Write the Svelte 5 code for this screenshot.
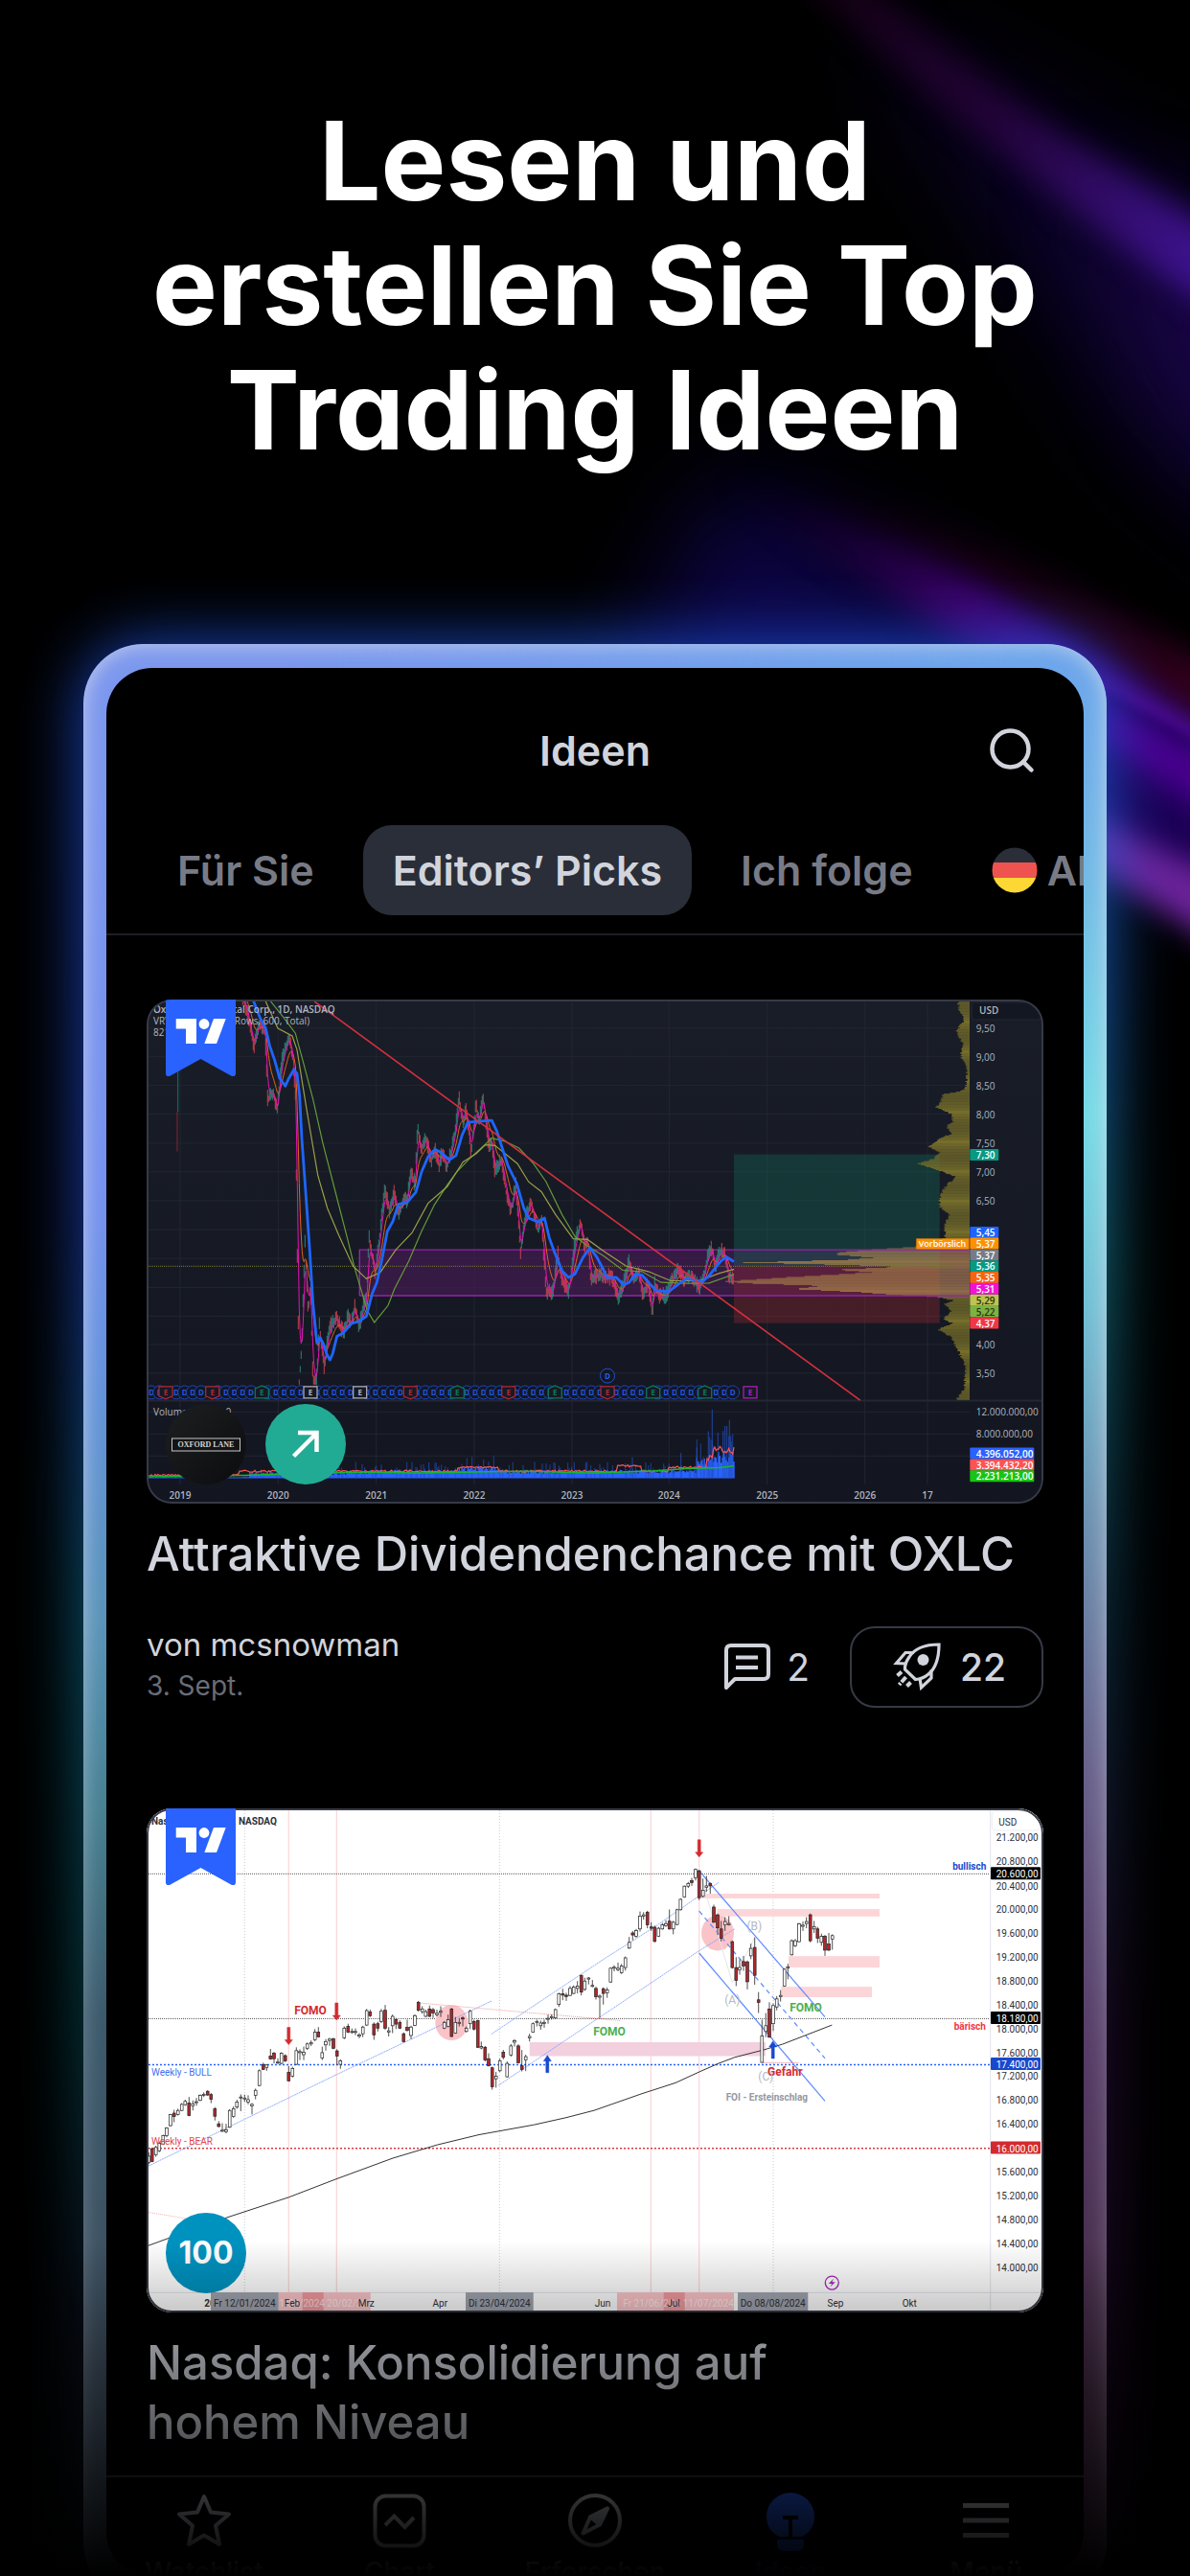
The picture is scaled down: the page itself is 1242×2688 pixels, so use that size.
<script>
  // ---------- helpers ----------
  function lcg(seed) {
    let s = seed;
    return () => {
      s = (s * 1664525 + 1013904223) % 4294967296;
      return s / 4294967296;
    };
  }
  const pairs = (str) => str.split(' ').map((p) => p.split(',').map(Number));
  const r1 = (n) => Math.round(n * 10) / 10;

  // ---------- dark chart ----------
  const ax = (x) => r1(x / 3 - 3);
  const ay = (y) => r1(y / 2.904 - 13);
  const lineA = (pts) => 'M' + pts.map(([x, y]) => `${ax(x)} ${ay(y)}`).join('L');

  function sampler(pts) {
    return (x) => {
      for (let i = 1; i < pts.length; i++) {
        if (x <= pts[i][0]) {
          const [x0, y0] = pts[i - 1];
          const [x1, y1] = pts[i];
          return y0 + ((y1 - y0) * (x - x0)) / (x1 - x0 || 1);
        }
      }
      return pts[pts.length - 1][1];
    };
  }

  const blue = pairs('343,40 365,95 382,125 395,180 410,222 425,275 443,300 455,275 470,250 480,262 488,330 495,460 507,620 520,800 530,960 542,1078 552,1062 562,1080 573,1112 583,1130 592,1110 605,1058 625,1048 650,1020 675,1012 697,998 715,930 730,895 745,830 763,740 780,710 797,658 825,652 852,622 870,560 890,515 912,492 930,500 957,524 978,510 997,448 1015,410 1060,406 1090,404 1105,435 1120,480 1140,540 1168,595 1190,670 1205,700 1235,712 1255,700 1270,760 1285,800 1310,860 1330,880 1350,870 1375,820 1398,790 1420,820 1440,858 1450,880 1480,880 1502,902 1520,895 1540,870 1560,872 1585,900 1605,920 1645,922 1675,900 1700,884 1750,892 1770,875 1790,850 1810,828 1825,818 1848,832');
  const green = pairs('395,40 440,95 475,140 500,230 530,340 560,470 600,620 640,770 660,850 700,980 722,1016 765,965 785,915 830,830 870,740 910,660 950,600 980,560 1020,520 1060,485 1090,458 1130,467 1175,488 1220,535 1260,590 1310,690 1350,755 1390,785 1440,815 1500,858 1560,862 1620,895 1700,898 1770,897 1848,870');
  const olive = pairs('380,40 420,125 465,148 480,190 510,370 545,570 575,670 610,750 655,845 697,884 740,865 790,795 840,745 890,655 950,605 1000,530 1040,505 1070,478 1100,480 1170,535 1205,590 1245,620 1290,690 1345,763 1390,765 1440,800 1510,845 1580,862 1650,890 1740,890 1800,868 1848,855');
  const price = pairs('310,30 325,80 345,180 360,110 380,130 388,340 405,320 418,375 430,240 440,195 455,150 465,200 475,330 482,900 487,1200 495,1080 505,780 515,980 522,900 530,1200 540,1200 550,1030 565,1150 580,1040 602,1000 625,1050 640,1000 650,1020 660,970 675,1030 690,960 698,940 705,760 725,870 735,790 745,700 755,620 770,680 785,625 797,690 815,640 825,650 835,560 850,600 857,430 870,490 885,460 900,530 912,490 925,540 935,500 950,545 965,490 978,420 987,340 1000,410 1010,370 1025,500 1040,360 1050,410 1062,330 1080,480 1090,470 1100,560 1120,520 1135,620 1150,680 1165,600 1180,810 1190,720 1212,650 1235,740 1245,700 1260,920 1280,930 1297,810 1310,890 1330,925 1350,780 1368,710 1380,790 1390,770 1400,890 1425,870 1440,880 1465,880 1485,940 1500,910 1520,830 1535,890 1550,860 1560,925 1580,905 1592,990 1600,900 1615,940 1635,935 1655,890 1675,850 1690,890 1705,880 1720,885 1740,915 1755,870 1765,820 1778,790 1790,850 1805,800 1820,810 1832,880 1848,880');

  const rnd = lcg(7);
  const at = sampler(price);
  let upBars = '';
  let downBars = '';
  let magenta = [];
  let orange = [];
  let fast = 40;
  let slow = 20;
  for (let x = 310; x <= 1848; x += 3) {
    const y = at(x);
    const drop = at(x + 4) - at(x - 4);
    const reach = 6 + rnd() * 24;
    const top = Math.max(42, y - reach);
    const bottom = Math.min(1205, y + 6 + rnd() * 20);
    const seg = `M${ax(x)} ${ay(top)}V${ay(bottom)}`;
    if (rnd() * 40 - 20 > drop) upBars += seg;
    else downBars += seg;
    fast += (y - fast) * 0.45;
    slow += (y - slow) * 0.16;
    magenta.push([x, Math.max(42, fast)]);
    orange.push([x, Math.max(42, slow)]);
  }

  // horizontal volume profile, left edge by height
  const profile = sampler(
    pairs('44,1135 70,1140 100,1155 135,1130 170,1150 210,1145 240,1165 300,1160 315,1150 325,1090 350,1080 365,1068 385,1115 410,1120 420,1100 445,1115 460,1075 485,1042 500,1080 520,1060 535,1012 550,1060 575,1130 600,1100 630,1080 665,1078 690,1110 720,1095 760,1095 788,1000 792,925 797,850 803,770 810,750 820,870 826,790 835,465 843,800 848,960 857,750 865,870 880,600 892,405 897,465 905,710 915,620 925,830 932,920 938,1060 950,1125 960,1090 980,1115 1005,1090 1020,1120 1038,1072 1060,1115 1100,1135 1150,1160 1220,1155 1250,1130').map(([y, x]) => [y, x + 1410])
  );
  let outer = '';
  let inner = '';
  for (let y = 46; y < 1252; y += 3) {
    const bar = `M${ax(profile(y) + rnd() * 8)} ${ay(y)}H859`;
    if (y > 790 && y < 940) inner += bar;
    else outer += bar;
  }

  let volume = '';
  let volSpike = '';
  const volAvg = [];
  for (let x = 16; x <= 1848; x += 4) {
    let h = x < 330 ? 3 : x < 640 ? 14 : 20;
    if (x > 1730) h = 50;
    if (x > 1770) h = 62;
    if (x > 980 && x < 1110) h = 28;
    volume += `M${ax(x)} ${ay(1488)}V${ay(1488 - h * (0.7 + rnd() * 0.6))}`;
    if (rnd() > 0.72 && x > 300) volSpike += `M${ax(x)} ${ay(1488)}V${ay(1488 - h * (1.2 + rnd() * 1.3))}`;
    const base = x < 300 ? 6 : x > 1780 ? 72 : x > 1762 ? 50 : x > 980 && x < 1110 ? 30 : x > 1480 && x < 1560 ? 34 : x > 1640 ? 30 : 18;
    volAvg.push([x, 1488 - base - rnd() * (x > 1760 ? 26 : 6)]);
  }
  const volGreen = pairs('16,1484 300,1480 500,1474 700,1469 850,1472 1000,1470 1200,1467 1400,1472 1480,1470 1600,1466 1700,1459 1800,1456 1848,1451');
  const spikes = pairs('1768,1346 1780,1280 1798,1350 1814,1345 1820,1330 1826,1330 1834,1312 1838,1360 1732,1395 1682,1412 1530,1425 1064,1432 1080,1438 893,1440');

  const earnings = [
    [69, '#b22833', 'r'], [215, '#b22833', 'r'], [370, '#0b7a5f', 'g'], [522, '#b2b5be', 'w'], [677, '#b2b5be', 'w'],
    [835, '#b22833', 'r'], [982, '#0b7a5f', 'g'], [1142, '#b22833', 'r'], [1288, '#0b7a5f', 'g'], [1452, '#b22833', 'r'],
    [1595, '#0b7a5f', 'g'], [1757, '#0b7a5f', 'g'], [1899, '#b01fc0', 'w']
  ];
  const shape = { r: 'M-7-6H7V4L0 7L-7 4Z', g: 'M-7 6H7V-4L0-7L-7-4Z', w: 'M-7-6H7V6H-7Z' };
  const dividends = [];
  for (let x = 24; x < 1870; x += 26) {
    if (!earnings.some(([e]) => Math.abs(e - x) < 14)) dividends.push(x);
  }

  const gridA = [124, 211, 298, 385, 473, 560, 647, 735, 822, 910, 997, 1083, 1170, 1287, 1354, 1421];
  const yearsA = [[114, '2019'], [421, '2020'], [728, '2021'], [1035, '2022'], [1341, '2023'], [1645, '2024'], [1952, '2025'], [2258, '2026'], [2454, '17']];
  const scaleA = [[124, '9,50'], [211, '9,00'], [298, '8,50'], [385, '8,00'], [473, '7,50'], [560, '7,00'], [647, '6,50'], [1083, '4,00'], [1170, '3,50'], [1287, '12.000.000,00'], [1354, '8.000.000,00']];
  const tagsA = [
    [508, '7,30', '#089981', '#fff'], [743, '5,45', '#1e63ff', '#fff'], [777, '5,37', '#ff9100', '#fff'], [812, '5,37', '#787b86', '#fff'],
    [846, '5,36', '#089981', '#fff'], [880, '5,35', '#f5650f', '#fff'], [914, '5,31', '#f312d2', '#fff'], [949, '5,29', '#bcc452', '#333a10'],
    [983, '5,22', '#7cb342', '#1f330c'], [1018, '4,37', '#f23645', '#fff']
  ];
  const volTags = [[1413, '4.396.052,00', '#2962ff'], [1448, '3.394.432,20', '#ff5252'], [1482, '2.231.213,00', '#18c415']];

  // ---------- light chart ----------
  const bx = (x) => r1(x / 3 - 3);
  const by = (y) => r1(y / 2.851 - 11);
  const lineB = (pts) => 'M' + pts.map(([x, y]) => `${bx(x)} ${by(y)}`).join('L');

  // x, body top, body bottom, high, low; a trailing r marks a falling day
  const raw = `16,1066,1085,1055,1090 26,1045,1082,1040,1084,r 38,1040,1062,1035,1068 49,1028,1050,1022,1054 61,1005,1030,1002,1032 72,982,1005,980,1010 84,942,975,940,978 95,938,948,928,965,r 107,930,942,925,945 119,912,930,908,932 130,903,913,898,916 142,908,945,890,947,r 154,910,916,900,930 165,904,907,893,916 177,885,900,882,902 188,882,885,876,890 200,873,884,870,886,r 211,883,897,878,908,r 223,925,947,920,960,r 235,970,978,962,980,r 246,989,992,968,994 258,988,993,970,998 269,930,980,926,982 281,925,948,918,952 292,905,920,898,925 304,890,893,882,932 316,893,896,883,905 327,898,905,885,912 339,912,916,908,942 350,870,885,865,897 362,812,856,808,858 374,794,808,788,810,r 385,795,802,792,812 397,768,777,747,779,r 408,760,776,756,790,r 420,786,789,775,793 431,760,790,757,793 443,767,783,763,786,r 454,817,842,798,844,r 466,805,828,800,832 478,752,793,742,795 489,755,758,748,780 501,757,764,740,780 512,732,745,728,750 524,728,732,722,738 536,697,720,688,724 547,697,711,682,713,r 559,758,774,740,780 570,725,735,718,752 582,718,722,714,738 594,717,745,714,748,r 605,753,768,748,795,r 616,782,793,778,806 628,685,714,680,718 640,680,697,672,700,r 652,695,698,686,702 663,695,698,686,706 675,705,709,700,715 686,682,702,678,712 698,633,676,628,678 709,637,648,630,652,r 721,673,705,668,720,r 733,672,685,666,695,r 744,635,665,628,670 756,632,685,616,690,r 767,693,697,682,710 779,650,678,645,700 790,660,673,655,688,r 802,668,685,662,688,r 814,702,725,698,728,r 825,683,692,660,695,r 837,682,707,678,718 849,648,677,644,679 860,608,632,604,636,r 872,628,636,620,642 883,636,650,630,652 895,628,650,618,652,r 906,630,640,625,655,r 918,641,645,630,650 930,635,638,620,652 941,668,685,664,688 953,660,680,645,683 964,628,710,625,712,r 976,668,700,652,702 988,668,671,655,680 999,655,658,650,680,r 1010,685,695,680,698 1022,635,672,630,688 1034,665,688,660,692,r 1046,663,742,660,744,r 1057,740,744,725,748 1069,742,780,738,784,r 1080,776,797,760,799,r 1091,803,860,800,868,r 1103,828,836,815,862 1115,782,812,776,816 1126,757,772,750,778,r 1138,790,830,784,832 1150,738,765,732,770 1161,723,727,718,740 1173,738,788,733,790,r 1184,797,808,750,814,r 1196,770,780,764,813 1208,710,714,702,725 1219,672,697,668,699 1231,665,668,660,680 1243,670,678,663,690 1254,668,671,660,684 1266,656,659,645,672 1277,651,654,644,660 1289,630,655,627,658 1300,583,615,580,622 1312,583,587,568,602,r 1323,587,591,580,604,r 1335,567,588,560,590 1346,563,582,558,584 1358,560,567,545,582 1370,528,578,526,588,r 1381,545,570,535,574 1393,536,539,533,555 1405,558,561,542,564 1416,567,592,562,600,r 1428,590,593,585,655 1439,568,582,564,615,r 1451,572,580,564,595 1462,507,548,504,550 1473,504,507,498,516 1485,507,511,490,516 1496,500,520,494,524 1508,476,505,472,514 1520,430,447,414,449 1531,402,408,396,424,r 1542,395,412,390,416 1554,352,390,338,398 1565,348,352,340,362 1577,340,378,336,388,r 1589,384,388,370,396,r 1600,385,427,380,430,r 1612,388,412,384,414 1624,378,390,372,392 1635,374,380,364,384 1646,367,390,332,392,r 1658,370,390,366,406 1670,333,377,330,379 1681,302,333,299,335 1693,263,295,261,297 1705,255,263,250,268 1716,246,252,238,262,r 1728,213,238,210,246 1739,217,297,214,304,r 1751,275,293,240,296 1762,262,266,232,280 1774,255,262,252,285,r 1785,325,370,318,372,r 1797,348,387,344,408,r 1808,390,418,366,427,r 1820,368,378,355,396 1832,374,378,352,380 1843,428,505,424,508,r 1855,505,543,474,560,r 1866,505,512,480,526 1878,487,500,470,515,r 1890,488,547,484,570,r 1901,448,470,434,480 1913,445,528,415,556,r 1925,601,609,578,640,r 1936,708,787,660,789 1948,678,695,640,712 1959,628,712,608,714,r 1971,618,672,612,694 1982,598,622,590,632 1994,588,592,572,606 2006,510,560,507,562 2017,503,507,494,540 2029,425,467,421,469 2040,425,440,420,444 2052,375,428,372,430 2064,379,382,368,396 2075,368,374,355,388 2087,348,425,344,430,r 2099,383,390,366,402 2110,390,418,384,432,r 2122,412,430,404,440 2133,412,453,408,470,r 2145,435,453,402,456,r 2156,410,420,406,452`;
  const candles = raw.split(' ').map((c) => {
    const [x, t, b, h, l, f] = c.split(',');
    return { x: bx(+x), t: by(+t), b: by(+b), h: by(+h), l: by(+l), down: f === 'r' };
  });
  const average = pairs('15,1332 150,1285 250,1252 455,1188 600,1135 780,1072 920,1032 1050,1002 1220,973 1320,952 1410,930 1560,880 1665,848 1740,815 1800,790 1850,772 1940,750 2000,733 2155,676');
  const scaleB = [[118, '21.200,00'], [189, '20.800,00'], [261, '20.400,00'], [331, '20.000,00'], [402, '19.600,00'], [473, '19.200,00'], [544, '18.800,00'], [615, '18.400,00'], [687, '18.000,00'], [757, '17.600,00'], [828, '17.200,00'], [899, '16.800,00'], [970, '16.400,00'], [1112, '15.600,00'], [1183, '15.200,00'], [1254, '14.800,00'], [1325, '14.400,00'], [1396, '14.000,00']];
  const tagsB = [[226, '20.600,00', '#000'], [656, '18.180,00', '#000'], [793, '17.400,00', '#1848cc'], [1042, '16.000,00', '#d32a2f']];
  const zones = [[1745, 285, 2304, 299], [1796, 331, 2304, 353], [2019, 471, 2304, 505], [1996, 562, 2280, 593]];
  const arrows = [[454, 683], [604, 610], [1739, 125]];
  const ups = [[1264, 766], [1970, 724]];
  const datesB = [
    [210, 422, 'Fr 12/01/2024'],
    [1008, 1220, 'Di 23/04/2024'],
    [1860, 2080, 'Do 08/08/2024']
  ];
  const monthsB = [[465, 'Feb'], [697, 'Mrz'], [928, 'Apr'], [1437, 'Jun'], [1659, 'Jul'], [2166, 'Sep'], [2398, 'Okt']];

  // ---------- navigation ----------
  const tabs = ['Für Sie', 'Editors’ Picks', 'Ich folge'];
  let active = $state(1);
</script>

{#snippet ribbon()}
  <svg class="ribbon" viewBox="0 0 73 80" aria-hidden="true">
    <path d="M0 0H73V78Q72 81 69 80L36.500 62L4 80Q1 81 0 78Z" fill="#2962ff" />
    <path d="M10.700 20H32V46H21V30.500H10.700Z" fill="#fff" />
    <circle cx="40" cy="25.500" r="5.400" fill="#fff" />
    <path d="M50 20H62.700L53 46H40.300Z" fill="#fff" />
  </svg>
{/snippet}

<div class="page">
  <svg class="beams" viewBox="0 0 1242 2688" preserveAspectRatio="xMaxYMin slice" aria-hidden="true">
    <defs>
      <filter id="soft" filterUnits="userSpaceOnUse" color-interpolation-filters="sRGB" x="0" y="-200" width="1500" height="1600"><feGaussianBlur stdDeviation="50" /></filter>
      <filter id="mid" filterUnits="userSpaceOnUse" color-interpolation-filters="sRGB" x="0" y="-200" width="1500" height="1600"><feGaussianBlur stdDeviation="15" /></filter>
      <filter id="fine" filterUnits="userSpaceOnUse" color-interpolation-filters="sRGB" x="0" y="-200" width="1500" height="1600"><feGaussianBlur stdDeviation="6" /></filter>
      <linearGradient id="arc" gradientUnits="userSpaceOnUse" x1="820" y1="0" x2="1242" y2="270">
        <stop offset="0" stop-color="#12000f" />
        <stop offset=".5" stop-color="#220338" />
        <stop offset="1" stop-color="#3c128c" />
      </linearGradient>
      <linearGradient id="ray" gradientUnits="userSpaceOnUse" x1="760" y1="490" x2="1242" y2="800">
        <stop offset="0" stop-color="#12001f" stop-opacity="0" />
        <stop offset=".5" stop-color="#3c006a" />
        <stop offset="1" stop-color="#5a10a8" />
      </linearGradient>
      <linearGradient id="ember" gradientUnits="userSpaceOnUse" x1="780" y1="480" x2="1242" y2="720">
        <stop offset="0" stop-color="#150008" stop-opacity="0" />
        <stop offset="1" stop-color="#30001c" />
      </linearGradient>
    </defs>
    <path d="M900 20L1400 280V640L1180 460Z" fill="#0b0328" filter="url(#soft)" />
    <path d="M1130 200L1400 320V560L1240 440Z" fill="#1a0548" filter="url(#soft)" />
    <path d="M820 -40H880Q1000 66 1110 142Q1200 196 1340 290V370Q1180 270 1070 180Q940 80 820 -40Z" fill="url(#arc)" filter="url(#mid)" />
    <path d="M760 500L1000 620L1262 800V960L1100 800L640 720Z" fill="#0c0444" filter="url(#soft)" />
    <path d="M760 480Q940 520 1070 590Q1180 645 1300 715V785Q1150 690 1010 610Q890 540 760 480Z" fill="url(#ember)" filter="url(#mid)" />
    <path d="M740 495Q940 560 1040 620Q1160 690 1300 790V870Q1110 740 970 650Q870 580 740 495Z" fill="url(#ray)" filter="url(#mid)" />
    <path d="M1150 720Q1200 745 1300 800V985L1150 880Z" fill="#1c0056" filter="url(#fine)" />
    <path d="M1140 725Q1200 755 1300 810V870Q1200 810 1140 765Z" fill="#4a0090" filter="url(#mid)" />
    <path d="M1120 840Q1200 885 1300 925V1005Q1200 940 1120 895Z" fill="#6a2298" filter="url(#mid)" />
  </svg>

  <h1>Lesen und<br />erstellen Sie Top<br />Trading Ideen</h1>

  <div class="device">
    <div class="glow"></div>
    <div class="frame">
      <div class="screen">
        <header class="bar">
          <h2>Ideen</h2>
          <button class="search" aria-label="Suche">
            <svg viewBox="0 0 48 48" fill="none" stroke="#d1d4dc" stroke-width="4.500" stroke-linecap="round">
              <circle cx="22.500" cy="22.500" r="19" />
              <path d="M36 36L44.500 44.500" />
            </svg>
          </button>
        </header>

        <nav class="tabs" aria-label="Kategorien">
          {#each tabs as tab, i}
            <button class:active={active === i} onclick={() => (active = i)}>{tab}</button>
          {/each}
          <button>
            <svg class="flag" viewBox="0 0 48 48" aria-hidden="true">
              <clipPath id="disc"><circle cx="24" cy="24" r="23.500" /></clipPath>
              <g clip-path="url(#disc)">
                <path d="M0 0H48V16H0Z" fill="#2a2e39" />
                <path d="M0 16H48V32H0Z" fill="#ef5350" />
                <path d="M0 32H48V48H0Z" fill="#fdd835" />
              </g>
            </svg>
            Aktien
          </button>
        </nav>

        <main>
          <article>
            <figure>
              <svg class="chart" viewBox="0 0 936 526" role="img" aria-label="Oxford Lane Capital Corp.">
                <defs>
                  <linearGradient id="night" x1="0" y1="0" x2="0" y2="1">
                    <stop offset="0" stop-color="#191d28" />
                    <stop offset="1" stop-color="#131620" />
                  </linearGradient>
                </defs>
                <path d="M0 0H936V526H0Z" fill="url(#night)" />
                {#each gridA as y}
                  <path d="M2 {ay(y)}H859" stroke="#222631" />
                {/each}
                {#each yearsA as [x]}
                  <path d="M{ax(x)} 2V506" stroke="#222631" />
                {/each}
                <path d="M2 {ay(1253)}H934" stroke="#232733" stroke-width="2" />

                <rect x={ax(676)} y={ay(796)} width={ax(2585) - ax(676)} height={ay(935) - ay(796)} fill="#4b1a58" fill-opacity=".6" />
                <rect x={ax(1848)} y={ay(507)} width={ax(2492) - ax(1848)} height={ay(846) - ay(507)} fill="#146b58" fill-opacity=".36" />
                <rect x={ax(1848)} y={ay(846)} width={ax(2492) - ax(1848)} height={ay(1018) - ay(846)} fill="#a32a33" fill-opacity=".34" />
                <path d={outer} stroke="#756d2b" stroke-width="1" />
                <path d={inner} stroke="#a8864a" stroke-width="1" stroke-opacity=".75" />
                <path d="M{ax(676)} {ay(935)}V{ay(796)}H859M{ax(676)} {ay(935)}H859" fill="none" stroke="#9525a8" stroke-width="1.400" />
                <path d="M2 {ay(846)}H859" stroke="#77802f" stroke-dasharray="1 1" />

                <path d="M{ax(107)} 70V{ay(378)}" stroke="#0d7a68" />
                <path d="M{ax(105)} {ay(378)}V{ay(498)}" stroke="#8a2431" />
                <path d={upBars} stroke="#2b8f80" fill="none" stroke-width=".9" />
                <path d={downBars} stroke="#d84352" fill="none" stroke-width=".9" />
                <path d={lineA(orange)} stroke="#e0651a" fill="none" stroke-width="1" />
                <path d={lineA(magenta)} stroke="#e612b4" fill="none" stroke-width="1" />
                <path d={lineA(green)} stroke="#659a38" fill="none" stroke-width="1.200" />
                <path d={lineA(olive)} stroke="#9a9f48" fill="none" stroke-width="1.200" />
                <path d={lineA(blue)} stroke="#1e66ff" fill="none" stroke-width="2.800" stroke-linejoin="round" />
                <path d="M{ax(535)} {ay(44)}L{ax(2243)} {ay(1252)}" stroke="#d6303f" stroke-width="1.600" />

                {#each dividends as x}
                  <circle cx={ax(x)} cy={ay(1228)} r="7" fill="#131722" stroke="#1c44b8" />
                  <text x={ax(x)} y={ay(1228) + 3} class="mark" fill="#2456dd">D</text>
                {/each}
                <circle cx={ax(1452)} cy={ay(1178)} r="7.500" fill="#131722" stroke="#2251d0" />
                <text x={ax(1452)} y={ay(1178) + 3} class="mark" fill="#2a5ce8">D</text>
                {#each earnings as [x, c, s]}
                  <g transform="translate({ax(x)} {ay(1228)})">
                    <path d={shape[s]} fill="#171a25" stroke={c} stroke-width="1.200" />
                    <text y="3" class="mark" fill={c}>E</text>
                  </g>
                {/each}

                <path d={volume} stroke="#2962ff" stroke-width="1.400" />
                <path d={volSpike} stroke="#2350c4" stroke-width=".7" />
                {#each spikes as [x, y]}
                  <path d="M{ax(x)} {ay(1488)}V{ay(y)}" stroke="#2350c4" stroke-width=".8" />
                {/each}
                <path d={lineA(volAvg)} stroke="#ff5252" fill="none" stroke-width="1.200" />
                <path d={lineA(volGreen)} stroke="#18b82a" fill="none" stroke-width="1.500" />

                <g class="axis">
                  <text x="7" y="14" class="strong">Oxford Lane Capital Corp., 1D, NASDAQ</text>
                  <text x="7" y="26">VRVP (Number Of Rows, 600, Total)</text>
                  <text x="7" y="38">821,9</text>
                  <text x="7" y={ay(1287) + 4}>Volume SMA 15 0</text>
                  {#each yearsA as [x, t]}
                    <text x={ax(x)} y={ay(1538) + 4} class="year">{t}</text>
                  {/each}
                  <rect x={ax(2593)} y="3" width="72" height="18" rx="3" fill="#131722" stroke="#232733" />
                  <text x={ax(2616)} y={ay(71) + 4} class="strong">USD</text>
                  {#each scaleA as [y, t]}
                    <text x={ax(2606)} y={ay(y) + 4}>{t}</text>
                  {/each}
                  <rect x={ax(2419)} y={ay(762)} width="55" height="11" fill="#ff9100" />
                  <text x={ax(2426)} y={ay(777) + 3} class="pre">Vorbörslich</text>
                  {#each tagsA as [y, t, bg, fg]}
                    <rect x={ax(2587)} y={ay(y) - 6} width="30" height="12" rx="1" fill={bg} />
                    <text x={ax(2606)} y={ay(y) + 4} class="tag" class:ink={fg !== '#fff'}>{t}</text>
                  {/each}
                  {#each volTags as [y, t, bg]}
                    <rect x={ax(2587)} y={ay(y) - 6} width="67" height="12" rx="1" fill={bg} />
                    <text x={ax(2606)} y={ay(y) + 4} class="tag">{t}</text>
                  {/each}
                </g>
              </svg>
              {@render ribbon()}
              <div class="badges">
                <svg viewBox="0 0 84 84" aria-hidden="true">
                  <defs>
                    <linearGradient id="coal" x1="0" y1="0" x2="1" y2="1">
                      <stop offset="0" stop-color="#1c1f20" />
                      <stop offset="1" stop-color="#0c0c0f" />
                    </linearGradient>
                  </defs>
                  <circle cx="42" cy="42" r="42" fill="url(#coal)" />
                  <rect x="6.500" y="36" width="71" height="13" fill="#141416" stroke="#c4c6c8" />
                  <text x="42" y="45" class="oxford">OXFORD LANE</text>
                </svg>
                <svg viewBox="0 0 84 84" aria-hidden="true">
                  <circle cx="42" cy="42" r="42" fill="#22ab94" />
                  <path d="M29.500 54.500L52 32M34 30H53.500V50" fill="none" stroke="#fff" stroke-width="4.500" />
                </svg>
              </div>
            </figure>
            <h3>Attraktive Dividendenchance mit OXLC</h3>
            <div class="meta">
              <p class="author">von mcsnowman<time datetime="2024-09-03">3. Sept.</time></p>
              <button class="comments" aria-label="2 Kommentare">
                <svg viewBox="0 0 50 50" fill="none" stroke="#d1d4dc" stroke-width="4" stroke-linejoin="round" aria-hidden="true">
                  <path d="M3 47V8Q3 3 8 3H42Q47 3 47 8V33Q47 38 42 38H12Z" />
                  <path d="M13 15.500H36M13 26H36" />
                </svg>
                2
              </button>
              <button class="boost" aria-label="22 Boosts">
                <svg viewBox="0 0 50 50" fill="none" stroke="#d1d4dc" stroke-width="3.200" aria-hidden="true">
                  <path d="M48 2Q25 2 17 15Q12 22 12.500 28L23.500 38.500Q31 38 37 33Q48 24 48 2Z" />
                  <circle cx="31.500" cy="18" r="6" fill="#d1d4dc" stroke="none" />
                  <path d="M22 10.500H13L3.500 21.500L14 22M40 28.500V37L29.500 47L28 37" />
                  <path d="M9 30.500L4.500 34.500M13.500 36L6.500 44M18.500 41.500L14.500 45.500" stroke-width="4" stroke-dasharray="7 1.500" />
                </svg>
                22
              </button>
            </div>
          </article>

          <article>
            <figure>
              <svg class="chart" viewBox="0 0 936 526" role="img" aria-label="Nasdaq 100 Index">
                <path d="M0 0H936V526H0Z" fill="#fff" />
                {#each [316, 1114, 1971] as x}
                  <path d="M{bx(x)} 2V505" stroke="#c9cbd2" stroke-dasharray="1 2" />
                {/each}
                {#each [454, 604, 1588, 1739] as x}
                  <path d="M{bx(x)} 2V505" stroke="#fbd9dc" stroke-width="1.300" />
                {/each}
                {#each [226, 657] as y}
                  <path d="M2 {by(y)}H880" stroke="#555" stroke-dasharray="1 1" />
                {/each}
                <path d="M2 {by(794)}H880" stroke="#2962ff" stroke-width="1.400" stroke-dasharray="2 2" />
                <path d="M2 {by(1043)}H880" stroke="#d83a40" stroke-width="1.400" stroke-dasharray="2 2" />

                <rect x={bx(1208)} y={by(727)} width={bx(1947) - bx(1208)} height="14.500" fill="#f3d0de" />
                {#each zones as [x0, y0, x1, y1]}
                  <rect x={bx(x0)} y={by(y0)} width={bx(x1) - bx(x0)} height={by(y1) - by(y0)} fill="#fcd5d8" />
                {/each}
                <ellipse cx={bx(964)} cy={by(669)} rx="17" ry="18.500" fill="#fac3c8" />
                <ellipse cx={bx(1797)} cy={by(402)} rx="17" ry="18.500" fill="#fac3c8" />

                <g fill="none" stroke="#84a4fa" stroke-width=".9" stroke-dasharray="2 .6">
                  <path d={lineB(pairs('15,1095 150,1033 600,825 1090,604'))} />
                  <path d={lineB(pairs('1088,703 1440,480 1600,384 1739,292 1800,252'))} />
                  <path d={lineB(pairs('1110,856 1440,645 1739,455 1850,390'))} />
                </g>
                <path d={lineB(pairs('15,1233 135,1252'))} stroke="#ef9a9a" stroke-width=".8" fill="none" stroke-dasharray="1 1" />
                <path d={lineB(pairs('860,610 1180,637 1494,663'))} stroke="#ef9a9a" fill="none" stroke-dasharray="1 1" />
                <path d={lineB(pairs('1739,217 2133,652'))} stroke="#5b8aff" stroke-width="1.200" fill="none" />
                <path d={lineB(pairs('1739,462 2133,902'))} stroke="#5b8aff" stroke-width="1.200" fill="none" />
                <path d={lineB(pairs('1739,337 2133,775'))} stroke="#5b8aff" stroke-width="1.200" fill="none" stroke-dasharray="5 4" />
                <path d={lineB(pairs('1739,217 1843,550 1913,415'))} stroke="#e3e4e8" fill="none" />
                <path d={lineB(pairs('1940,788 2050,788'))} stroke="#ef7a7a" fill="none" stroke-dasharray="1 1" />
                <path d={lineB(average)} stroke="#333" stroke-width="1" fill="none" />

                {#each candles as c}
                  <path d="M{c.x} {c.h}V{c.l}" stroke="#222" stroke-width=".8" />
                  <rect x={c.x - 1.4} y={c.t} width="2.800" height={Math.max(1, c.b - c.t)} fill={c.down ? '#b3262b' : '#fff'} stroke="#222" stroke-width=".7" />
                {/each}

                {#each arrows as [x, y]}
                  <path transform="translate({bx(x)} {by(y)})" d="M-1.500 0H1.500V13H4L0 18L-4 13H-1.500Z" fill="#d32a2f" stroke="#d32a2f" stroke-width=".5" />
                {/each}
                {#each ups as [x, y]}
                  <path transform="translate({bx(x)} {by(y)})" d="M-1.500 18H1.500V6H4L0 0L-4 6H-1.500Z" fill="#1848cc" stroke="#1848cc" stroke-width=".5" />
                {/each}

                <g class="note">
                  <text x={bx(522)} y={by(644)} fill="#d32a2f">FOMO</text>
                  <text x={bx(1458)} y={by(708)} fill="#4caf50">FOMO</text>
                  <text x={bx(2073)} y={by(637)} fill="#4caf50">FOMO</text>
                  <text x={bx(2008)} y={by(827)} fill="#d32a2f">Gefahr</text>
                  <text x={bx(1951)} y={by(902)} fill="#9598a1" class="small">FOI - Ersteinschlag</text>
                  <text x={bx(1912)} y={by(393)} fill="#b5b8c0" class="wave">(B)</text>
                  <text x={bx(1843)} y={by(612)} fill="#b5b8c0" class="wave">(A)</text>
                  <text x={bx(1948)} y={by(840)} fill="#b5b8c0" class="wave">(C)</text>
                  <text x={bx(2585)} y={by(214)} fill="#1848cc" class="small">bullisch</text>
                  <text x={bx(2587)} y={by(689)} fill="#f23645" class="small">bärisch</text>
                </g>

                <g class="scale">
                  <text x="5" y={by(79)} class="bold">Nasdaq 100 Index, , NASDAQ</text>
                  <text x="5" y={by(827)} class="bull">Weekly - BULL</text>
                  <text x="5" y={by(1031)} class="bear">Weekly - BEAR</text>
                  <path d="M2 {by(1472)}H934M{bx(2651)} 2V524" stroke="#e0e3eb" />
                  {#each scaleB as [y, t]}
                    <text x={bx(2669)} y={by(y) + 4}>{t}</text>
                  {/each}
                  <rect x={bx(2656)} y="3" width="50" height="20" rx="4" fill="#fff" stroke="#eceef2" />
                  <text x={bx(2677)} y={by(71) + 4}>USD</text>
                  {#each tagsB as [y, t, bg]}
                    <rect x={bx(2652)} y={by(y) - 7} width="52" height="13" rx="1" fill={bg} />
                    <text x={bx(2669)} y={by(y) + 4} class="tag">{t}</text>
                  {/each}

                  <text x={bx(190)} y={by(1513)} class="bold">2024</text>
                  <rect x={bx(422)} y="505" width="96" height="19" fill="#fbc4c8" />
                  <rect x={bx(497)} y="505" width="22" height="19" fill="#f2999e" />
                  <text x={bx(424)} y={by(1513)} class="pale">1/02/2024 20/02/2024</text>
                  <rect x={bx(1482)} y="505" width="122" height="19" fill="#fbc4c8" />
                  <rect x={bx(1628)} y="505" width="22" height="19" fill="#f2999e" />
                  <text x={bx(1501)} y={by(1513)} class="pale">Fr 21/06/2</text>
                  <text x={bx(1644)} y={by(1513)} class="pale">Do 11/07/2024</text>
                  {#each datesB as [x0, x1, t]}
                    <rect x={bx(x0)} y="505" width={bx(x1) - bx(x0)} height="19" fill="#a0a4ae" />
                    <text x={bx((x0 + x1) / 2)} y={by(1513)} class="mid">{t}</text>
                  {/each}
                  {#each monthsB as [x, t]}
                    <text x={bx(x)} y={by(1513)} class="mid">{t}</text>
                  {/each}
                </g>
                <circle cx={bx(2155)} cy={by(1443)} r="7" fill="#fff" stroke="#a427b8" stroke-width="1.300" />
                <path transform="translate({bx(2155)} {by(1443)})" d="M2-4.500L-3.500 .8H0L-2 4.500L3.500-.8H0Z" fill="#a427b8" />
              </svg>
              {@render ribbon()}
              <div class="badges">
                <span class="hundred">100</span>
              </div>
            </figure>
            <h3>Nasdaq: Konsolidierung auf<br />hohem Niveau</h3>
          </article>
        </main>

        <nav class="dock" aria-label="Hauptmenü">
          <a href="#watchlist">
            <svg viewBox="0 0 56 56" fill="none" stroke="currentColor" stroke-width="4" stroke-linejoin="round" aria-hidden="true">
              <path d="M28 3L35 19.500L54 21.500L40 33.500L44 53L28 43.500L12 53L16 33.500L2 21.500L21 19.500Z" />
            </svg>
            Watchlist
          </a>
          <a href="#chart">
            <svg viewBox="0 0 56 56" fill="none" stroke="currentColor" stroke-width="4" aria-hidden="true">
              <rect x="2.500" y="2.500" width="51" height="52" rx="11" />
              <path d="M13 33L22.500 23.500L33.500 35L43 25" />
            </svg>
            Chart
          </a>
          <a href="#erforschen">
            <svg viewBox="0 0 56 56" fill="none" stroke="currentColor" stroke-width="4" stroke-linejoin="round" aria-hidden="true">
              <circle cx="28" cy="28" r="26" />
              <path d="M41 15.500L23 24.500L15.500 41.500L33 32.500Z" />
              <path d="M41 15.500L23 24.500L33 32.500Z" fill="currentColor" />
            </svg>
            Erforschen
          </a>
          <a href="#ideen" class="current">
            <svg viewBox="0 0 56 56" aria-hidden="true">
              <path d="M16 45Q3 38 3 24A25 25 0 0 1 53 24Q53 38 40 45H30V27H36V23H20V27H26V45Z" fill="currentColor" />
              <path d="M14 48H42V52Q42 60 34 60H22Q14 60 14 52Z" fill="currentColor" />
            </svg>
            Ideen
          </a>
          <a href="#menue">
            <svg viewBox="0 0 56 56" stroke="currentColor" stroke-width="5" aria-hidden="true">
              <path d="M4 12.500H52M4 28H52M4 43.500H52" />
            </svg>
            Menü
          </a>
        </nav>
      </div>
    </div>
  </div>
  <div class="fade"></div>
</div>

<style>
  :global(body) {
    margin: 0;
    background: #000;
  }
  .page {
    position: relative;
    box-sizing: border-box;
    height: 100vh;
    overflow: hidden;
    padding: 103px 87px 0;
    background: #000;
    font-family: Inter, 'Liberation Sans', sans-serif;
    color: #d1d4dc;
  }
  .beams {
    position: absolute;
    inset: 0;
    width: 100%;
    height: 100%;
  }
  h1,
  h2,
  h3,
  p,
  figure {
    margin: 0;
  }
  button {
    border: 0;
    padding: 0;
    background: none;
    color: inherit;
    font: inherit;
    cursor: pointer;
  }
  h1 {
    position: relative;
    font-size: 114px;
    font-weight: 700;
    line-height: 130px;
    font-feature-settings: 'cv11';
    color: #fff;
    text-align: center;
    white-space: nowrap;
  }
  .device {
    position: relative;
    margin-top: 179px;
  }
  .glow {
    position: absolute;
    inset: -4px;
    border-radius: 70px;
    background: linear-gradient(#1d50d8, #1f48c8 30%, #0d6d90 50%, #06505a 70%, #101c30 85%);
    filter: blur(32px);
    opacity: 0.8;
  }
  .glow::after {
    content: '';
    position: absolute;
    inset: 0;
    border-radius: inherit;
    background: linear-gradient(#1d50d8, #1a70d8 18%, #16899c 32%, #12405c 50%, #2a103a 70%, #240a30 90%);
    mask-image: linear-gradient(90deg, transparent 20%, #000 90%);
  }
  .frame {
    position: relative;
    padding: 25px 24px;
    border-radius: 62px;
    background: linear-gradient(#7c98ee, #7591f0 28%, #6292dc 38%, #5893b8 50%, #457f90 60%, #3b5a6c 70%, #3c4c5c 88%);
    overflow: hidden;
  }
  .frame::before,
  .frame::after {
    content: '';
    position: absolute;
    inset: 0;
    border-radius: inherit;
  }
  .frame::before {
    background: linear-gradient(#6ca4ec, #72bbe6 12%, #76dbe6 24%, #72bfd4 34%, #6c90b0 45%, #68608a 58%, #563c66 72%, #40283f 90%);
    mask-image: linear-gradient(90deg, transparent 20%, #000 92%);
  }
  .frame::after {
    box-shadow: inset 0 0 22px rgba(225, 225, 235, 0.75);
    mask-image: linear-gradient(#000 40%, rgba(0, 0, 0, 0.4) 75%);
  }
  .screen {
    position: relative;
    z-index: 1;
    overflow: hidden;
    border-radius: 48px;
    background: #000;
  }
  .bar {
    display: grid;
    grid-template-columns: 1fr auto 1fr;
    align-items: center;
    height: 64px;
    padding: 54px 51px 46px;
  }
  .bar h2 {
    grid-column: 2;
    font-size: 43px;
    font-weight: 600;
    line-height: 64px;
  }
  .search {
    justify-self: end;
    width: 48px;
    height: 48px;
  }
  .search svg {
    display: block;
  }
  .tabs {
    display: flex;
    gap: 20px;
    padding: 0 0 19px 43px;
    overflow: hidden;
    border-bottom: 2px solid #1e1f26;
  }
  .tabs button {
    display: flex;
    flex: none;
    align-items: center;
    gap: 10px;
    height: 94px;
    padding: 0 31px;
    border-radius: 30px;
    color: #787b86;
    font-size: 43px;
    font-weight: 600;
    white-space: nowrap;
  }
  .tabs .active {
    background: #2a2e39;
    color: #d1d4dc;
  }
  .flag {
    width: 48px;
    height: 48px;
  }
  main {
    display: flex;
    flex-direction: column;
    gap: 105px;
    padding: 67px 42px 24px;
  }
  figure {
    position: relative;
    overflow: hidden;
    border-radius: 26px;
  }
  figure::before {
    content: '';
    position: absolute;
    inset: 0;
    border: 2px solid #363a45;
    border-radius: inherit;
  }
  .chart {
    display: block;
    width: 100%;
  }
  .ribbon {
    position: absolute;
    top: 0;
    left: 20px;
    width: 73px;
    height: 80px;
  }
  .badges {
    position: absolute;
    bottom: 20px;
    left: 20px;
    display: flex;
    gap: 20px;
  }
  .badges svg,
  .hundred {
    width: 84px;
    height: 84px;
  }
  .hundred {
    border-radius: 50%;
    background: #0092bf;
    color: #fff;
    font-size: 32px;
    font-weight: 700;
    line-height: 84px;
    text-align: center;
  }
  .oxford {
    font: 700 8px 'Liberation Serif', serif;
    fill: #d0d2d4;
    text-anchor: middle;
  }
  .mark {
    font: 700 8px 'Open Sans', sans-serif;
    text-anchor: middle;
  }
  .axis text {
    font: 400 10px 'Open Sans', sans-serif;
    fill: #b2b5be;
  }
  .axis .strong {
    font-weight: 600;
  }
  .axis .year {
    font-weight: 600;
    text-anchor: middle;
  }
  .axis .tag {
    font-weight: 600;
    fill: #fff;
  }
  .axis .pre {
    font-size: 9px;
    font-weight: 600;
    fill: #fff;
  }
  .axis .ink {
    fill: #2a3510;
  }
  .note text {
    font: 700 12px Roboto, sans-serif;
    text-anchor: middle;
  }
  .note .small {
    font-size: 10px;
  }
  .note .wave {
    font-size: 12px;
    font-weight: 400;
  }
  .scale text {
    font: 400 10px Roboto, sans-serif;
    fill: #2c303b;
  }
  .scale .bold {
    font-weight: 700;
  }
  .scale .bull {
    fill: #3f73f5;
  }
  .scale .bear {
    fill: #e0474c;
  }
  .scale .tag {
    fill: #fff;
  }
  .scale .pale {
    fill: #fff;
    fill-opacity: 0.7;
  }
  .scale .mid {
    text-anchor: middle;
  }
  h3 {
    margin-top: 22px;
    font-size: 49px;
    font-weight: 500;
    line-height: 62px;
    white-space: nowrap;
  }
  .meta {
    display: flex;
    align-items: center;
    margin-top: 43px;
  }
  .author {
    display: flex;
    flex: 1;
    flex-direction: column;
    font-size: 33px;
    line-height: 40px;
  }
  time {
    color: #6a6d78;
    font-size: 28px;
    line-height: 46px;
  }
  .comments,
  .boost {
    display: flex;
    align-items: center;
    font-size: 39px;
  }
  .comments {
    gap: 16px;
    margin-right: 42px;
  }
  .comments svg,
  .boost svg {
    width: 50px;
    height: 50px;
  }
  .boost {
    box-sizing: border-box;
    justify-content: center;
    gap: 20px;
    width: 202px;
    height: 85px;
    padding-left: 6px;
    border: 2px solid #363a45;
    border-radius: 26px;
    font-weight: 500;
  }
  .dock {
    display: grid;
    grid-template-columns: repeat(5, 1fr);
    height: 105px;
    border-top: 2px solid #2a2e39;
  }
  .dock a {
    display: flex;
    flex-direction: column;
    align-items: center;
    gap: 10px;
    padding-top: 17px;
    color: #d1d4dc;
    font-size: 28px;
    font-weight: 500;
    line-height: 32px;
    text-decoration: none;
  }
  .dock svg {
    flex: none;
    width: 56px;
    height: 56px;
    overflow: visible;
  }
  .dock .current {
    color: #2962ff;
  }
  .fade {
    position: absolute;
    z-index: 2;
    right: 0;
    bottom: 0;
    left: 0;
    height: 350px;
    background: linear-gradient(transparent, #000);
    pointer-events: none;
  }
</style>
